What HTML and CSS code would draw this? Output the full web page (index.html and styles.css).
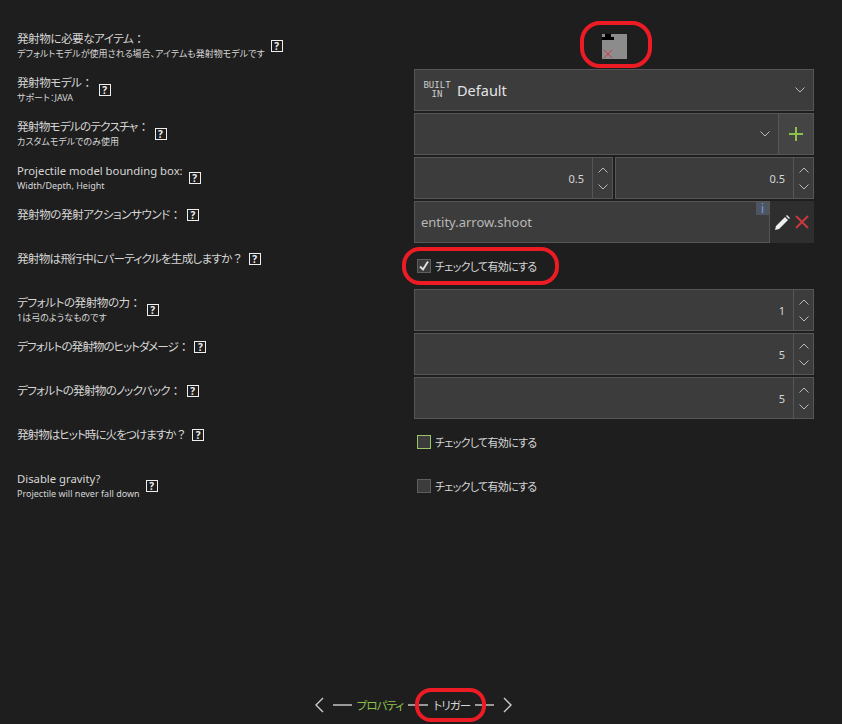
FILE: index.html
```html
<!DOCTYPE html>
<html lang="ja">
<head>
    <meta charset="UTF-8">
    <title>Projectile settings</title>
    <link rel="stylesheet" href="styles.css">
</head>
<body>
    <svg class="defs" width="0" height="0">
        <symbol id="down" viewBox="0 0 10 6"><path d="M0.5 0.5l4.5 4.5 4.5-4.5" fill="none" stroke="#bbb" stroke-width="1"/></symbol>
        <symbol id="up" viewBox="0 0 10 6"><path d="M0.5 5.5l4.5-4.5 4.5 4.5" fill="none" stroke="#bbb" stroke-width="1"/></symbol>
    </svg>

    <div class="form">
        <!-- item -->
        <div class="label"><div class="text"><p class="title loose">発射物に必要なアイテム<span class="full">：</span></p><p class="sub">デフォルトモデルが使用される場合、アイテムも発射物モデルです</p></div><span class="help">?</span></div>
        <div class="item-cell">
            <div class="item-pic">
                <svg width="25" height="25" viewBox="0 0 25 25">
                    <rect x="0" y="3" width="12" height="3" fill="#000"/>
                    <rect x="3" y="0" width="6" height="3" fill="#000"/>
                    <path d="M2 16l8 8M10 16l-8 8" stroke="#d0393f" stroke-width="1"/>
                </svg>
            </div>
        </div>

        <div class="label"><div class="text"><p class="title loose">発射物モデル<span class="full">：</span></p><p class="sub">サポート：JAVA</p></div><span class="help">?</span></div>
        <div class="field select">
            <span class="builtin">BUILT<br>IN</span>
            <span class="select-value">Default</span>
            <svg class="caret" width="10" height="6"><use href="#down"/></svg>
        </div>

        <div class="label"><div class="text"><p class="title">発射物モデルのテクスチャ<span class="full">：</span></p><p class="sub">カスタムモデルでのみ使用</p></div><span class="help">?</span></div>
        <div class="field select">
            <span class="select-value"></span>
            <svg class="caret" width="10" height="6"><use href="#down"/></svg>
            <span class="add-btn">
                <svg width="16" height="16" viewBox="0 0 16 16"><path d="M8 1v14M1 8h14" stroke="#8bc34a" stroke-width="2"/></svg>
            </span>
        </div>

        <div class="label"><div class="text"><p class="title latin">Projectile model bounding box:</p><p class="sub">Width/Depth, Height</p></div><span class="help">?</span></div>
        <div class="pair">
            <div class="field spinner"><span class="value">0.5</span><span class="arrows"><svg width="10" height="6"><use href="#up"/></svg><svg width="10" height="6"><use href="#down"/></svg></span></div>
            <div class="field spinner"><span class="value">0.5</span><span class="arrows"><svg width="10" height="6"><use href="#up"/></svg><svg width="10" height="6"><use href="#down"/></svg></span></div>
        </div>

        <div class="label single"><div class="text"><p class="title loose">発射物の発射アクションサウンド<span class="full">：</span></p></div><span class="help">?</span></div>
        <div class="sound">
            <div class="field sound-name">entity.arrow.shoot<span class="info">i</span></div>
            <div class="sound-btns">
                <svg width="15" height="15" viewBox="0 0 15 15"><path d="M0 15l1-4 9-9 3 3-9 9zM11 1l1-1 3 3-1 1z" fill="#eee"/></svg>
                <svg width="14" height="14" viewBox="0 0 14 14"><path d="M1 1l12 12M13 1L1 13" stroke="#c9393c" stroke-width="2"/></svg>
            </div>
        </div>

        <div class="label single"><div class="text"><p class="title">発射物は飛行中にパーティクルを生成しますか<span class="full">？</span></p></div><span class="help">?</span></div>
        <label class="check"><span class="box"><svg width="12" height="12" viewBox="0 0 12 12"><path d="M2 6.5l3 3 5-8" fill="none" stroke="#ddd" stroke-width="2"/></svg></span>チェックして有効にする</label>

        <div class="label"><div class="text"><p class="title loose">デフォルトの発射物の力<span class="full">：</span></p><p class="sub">1は弓のようなものです</p></div><span class="help">?</span></div>
        <div class="field spinner"><span class="value">1</span><span class="arrows"><svg width="10" height="6"><use href="#up"/></svg><svg width="10" height="6"><use href="#down"/></svg></span></div>

        <div class="label single"><div class="text"><p class="title tight">デフォルトの発射物のヒットダメージ<span class="full">：</span></p></div><span class="help">?</span></div>
        <div class="field spinner"><span class="value">5</span><span class="arrows"><svg width="10" height="6"><use href="#up"/></svg><svg width="10" height="6"><use href="#down"/></svg></span></div>

        <div class="label single"><div class="text"><p class="title">デフォルトの発射物のノックバック<span class="full">：</span></p></div><span class="help">?</span></div>
        <div class="field spinner"><span class="value">5</span><span class="arrows"><svg width="10" height="6"><use href="#up"/></svg><svg width="10" height="6"><use href="#down"/></svg></span></div>

        <div class="label single"><div class="text"><p class="title tight">発射物はヒット時に火をつけますか<span class="full">？</span></p></div><span class="help">?</span></div>
        <label class="check"><span class="box hover"></span>チェックして有効にする</label>

        <div class="label"><div class="text"><p class="title latin">Disable gravity?</p><p class="sub">Projectile will never fall down</p></div><span class="help">?</span></div>
        <label class="check"><span class="box"></span>チェックして有効にする</label>
    </div>

    <div class="pager">
        <svg width="10" height="16" viewBox="0 0 10 16"><path d="M9 1L2 8l7 7" fill="none" stroke="#ccc" stroke-width="1.4"/></svg>
        <span class="line"></span>
        <span class="step done">プロパティ</span>
        <span class="line long"></span>
        <span class="step">トリガー</span>
        <span class="line"></span>
        <svg width="10" height="16" viewBox="0 0 10 16"><path d="M1 1l7 7-7 7" fill="none" stroke="#ccc" stroke-width="1.4"/></svg>
    </div>

    <!-- red marks drawn over the screenshot -->
    <div class="mark mark-item"></div>
    <div class="mark mark-check"></div>
    <div class="mark mark-tab"></div>
</body>
</html>
```

FILE: styles.css
```css
html, body {
    margin: 0;
    padding: 0;
}
body {
    position: relative;
    display: flex;
    flex-direction: column;
    width: 842px;
    height: 724px;
    overflow: hidden;
    background-color: #1e1e1e;
    color: #d6d6d6;
    font-family: "Noto Sans", "Noto Sans CJK JP", sans-serif;
    font-size: 12px;
    font-feature-settings: "palt";
}
.defs {
    position: absolute;
}
p {
    margin: 0;
}
.form {
    display: grid;
    grid-template-columns: 397px 400px;
    grid-auto-rows: 42px;
    row-gap: 2px;
    padding: 25px 0 0 17px;
}
.label {
    display: flex;
    align-items: center;
    align-self: start;
    height: 41px;
}
.label.single {
    height: 27px;
}
.title {
    font-size: 11.6px;
    line-height: 16px;
    letter-spacing: -0.75px;
    white-space: nowrap;
}
.title.loose {
    letter-spacing: -0.5px;
}
.title.tight {
    letter-spacing: -1px;
}
.title.latin {
    font-size: 11.3px;
    letter-spacing: 0;
}
.full {
    font-feature-settings: normal;
}
.sub {
    font-size: 9px;
    line-height: 14px;
    white-space: nowrap;
}
.help {
    box-sizing: border-box;
    width: 12px;
    height: 12px;
    margin-left: 6px;
    border: 1px solid #eee;
    color: #eee;
    font-size: 10px;
    font-weight: bold;
    line-height: 10px;
    text-align: center;
}
.item-cell {
    display: flex;
    align-items: center;
    justify-content: center;
}
.item-pic {
    width: 25px;
    height: 25px;
    background-color: #8c8c8c;
    line-height: 0;
}
.field {
    box-sizing: border-box;
    display: flex;
    align-items: center;
    height: 42px;
    background-color: #3c3c3c;
    border: 1px solid #565656;
}
.select {
    padding-left: 9px;
}
.builtin {
    width: 28px;
    margin-left: -1px;
    font-family: "DejaVu Sans Mono", monospace;
    font-size: 9px;
    line-height: 9px;
    text-align: center;
    color: #ccc;
}
.select-value {
    flex: 1;
    margin-left: 6px;
    font-size: 14.5px;
    color: #e4e4e4;
}
.caret {
    margin-right: 8px;
}
.add-btn {
    box-sizing: border-box;
    display: flex;
    align-items: center;
    justify-content: center;
    align-self: stretch;
    width: 35px;
    border-left: 1px solid #565656;
    background-color: #444;
}
.pair {
    display: flex;
    gap: 2px;
}
.pair .field {
    flex: 1;
}
.spinner {
    justify-content: flex-end;
}
.value {
    margin-right: 8px;
    font-size: 11px;
}
.arrows {
    display: flex;
    flex-direction: column;
    align-items: center;
    justify-content: center;
    gap: 11px;
    align-self: stretch;
    width: 19px;
    border-left: 1px solid #565656;
}
.sound {
    display: flex;
    background-color: #2e2e2e;
}
.sound-name {
    position: relative;
    width: 356px;
    padding-left: 6px;
    font-size: 13px;
    color: #b8b8b8;
}
.info {
    position: absolute;
    top: 0;
    right: 0;
    width: 13px;
    height: 13px;
    background-color: #4f5560;
    color: #6ea0ee;
    font-size: 12px;
    line-height: 13px;
    text-align: center;
}
.sound-btns {
    display: flex;
    align-items: center;
    gap: 5px;
    padding-left: 5px;
}
.check {
    display: flex;
    align-items: center;
    padding-left: 3px;
    font-size: 11px;
    letter-spacing: -0.7px;
}
.box {
    box-sizing: border-box;
    display: flex;
    align-items: center;
    justify-content: center;
    width: 14px;
    height: 14px;
    margin-right: 4px;
    background-color: #3c3c3c;
    border: 1px solid #5e5e5e;
}
.box.hover {
    border-color: #9cc565;
}
.pager {
    display: flex;
    align-items: center;
    justify-content: center;
    margin-top: auto;
    height: 38px;
    padding-right: 15px;
    font-size: 11.5px;
    letter-spacing: -0.9px;
}
.line {
    width: 19px;
    height: 2px;
    margin: 0 5px;
    background-color: #999;
}
.line.long {
    width: 20px;
}
.pager svg:first-child {
    margin-right: 4px;
}
.pager svg:last-child {
    margin-left: 4px;
}
.step.done {
    color: #8bc34a;
}
.mark {
    position: absolute;
    box-sizing: border-box;
    border: 4px solid #ed1c24;
}
.mark-item {
    left: 580px;
    top: 21px;
    width: 72px;
    height: 47px;
    border-radius: 20px;
}
.mark-check {
    left: 402px;
    top: 247px;
    width: 157px;
    height: 38px;
    border-radius: 18px;
}
.mark-tab {
    left: 415px;
    top: 688px;
    width: 71px;
    height: 34px;
    border-radius: 16px;
}
```
